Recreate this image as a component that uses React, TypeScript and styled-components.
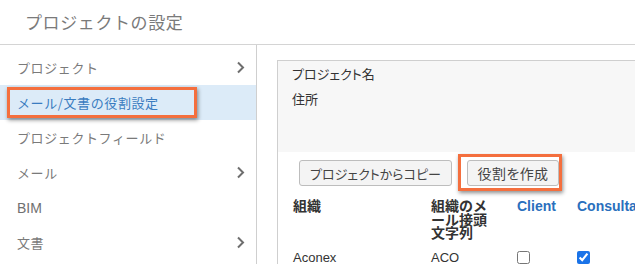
import React from "react";
import styled, { createGlobalStyle } from "styled-components";

const GlobalStyle = createGlobalStyle`
  html, body { margin: 0; padding: 0; background: #fff; }
  body {
    font-family: "Liberation Sans", "Noto Sans CJK JP", sans-serif;
    width: 635px; height: 264px; overflow: hidden;
  }
`;

const Page = styled.div`
  width: 635px;
  height: 264px;
  overflow: hidden;
  display: flex;
  flex-direction: column;
`;

const Header = styled.header`
  flex: none;
  height: 45px;
  border-bottom: 1px solid #d4d4d4;
  display: flex;
  align-items: center;
  padding-left: 25px;
  box-sizing: border-box;
`;

const Title = styled.h1`
  margin: -2px 0 0;
  font-family: "Noto Sans CJK JP", sans-serif;
  font-weight: 400;
  font-size: 17px;
  letter-spacing: 0.6px;
  color: #7a7a7a;
  line-height: 1;
`;

const Body = styled.div`
  flex: 1;
  display: flex;
  min-height: 0;
`;

const Sidebar = styled.nav`
  width: 257px;
  flex: none;
  border-right: 1px solid #cfcfcf;
  padding-top: 5px;
  box-sizing: border-box;
`;

const NavItem = styled.div<{ $active?: boolean }>`
  position: relative;
  height: 35px;
  display: flex;
  align-items: center;
  justify-content: space-between;
  padding: 0 11px 0 17px;
  background: ${(p) => (p.$active ? "#dcebf8" : "transparent")};
  color: ${(p) => (p.$active ? "#3a7cc0" : "#7a7a7a")};
  font-family: "Noto Sans CJK JP", sans-serif;
  font-size: 13px;
  letter-spacing: 0.6px;
`;

const NavLatin = styled.span`
  font-family: "Liberation Sans", sans-serif;
  font-size: 14px;
  letter-spacing: 0;
  color: #707070;
`;

const Highlight = styled.div`
  position: absolute;
  box-sizing: border-box;
  border: 3px solid #f46f3e;
  box-shadow: 1px 2px 4px rgba(0, 0, 0, 0.45);
  pointer-events: none;
`;

const NavHighlight = styled(Highlight)`
  left: 7px;
  top: 2px;
  width: 190px;
  height: 31px;
`;

const Chevron = () => (
  <svg width="9" height="13" viewBox="0 0 9 13" aria-hidden>
    <path d="M2 1.5 L7 6.5 L2 11.5" fill="none" stroke="#6e6e6e" strokeWidth="2" />
  </svg>
);

const Main = styled.main`
  flex: 1;
  min-width: 0;
  overflow: hidden;
  padding: 15px 0 0 20px;
`;

const Content = styled.section`
  width: 600px;
  height: 100%;
  border-top: 1px solid #cfcfcf;
  border-left: 1px solid #cfcfcf;
  box-sizing: border-box;
`;

const InfoBox = styled.div`
  height: 91px;
  background: #f7f7f7;
  padding: 0 0 0 14px;
  box-sizing: border-box;
  display: flex;
  flex-direction: column;
`;

const InfoLine = styled.div`
  height: 25px;
  display: flex;
  align-items: center;
  font-family: "Noto Sans CJK JP", sans-serif;
  font-feature-settings: "palt";
  font-size: 13px;
  color: #333;
`;

const Toolbar = styled.div`
  display: flex;
  gap: 15px;
  padding: 8px 0 0 21px;
  height: 47px;
  box-sizing: border-box;
`;

const Button = styled.button`
  height: 26px;
  box-sizing: border-box;
  border: 1px solid #bdbdbd;
  border-radius: 3px;
  background: #f4f4f4;
  color: #444;
  font-family: "Noto Sans CJK JP", sans-serif;
  font-feature-settings: "palt";
  font-size: 13px;
  padding: 0;
  white-space: nowrap;
  display: flex;
  align-items: center;
  justify-content: center;
`;

const CopyButton = styled(Button)`
  width: 153px;
`;

const CreateButton = styled(Button)`
  width: 92px;
  font-size: 14px;
  letter-spacing: 0.4px;
`;

const HighlightWrap = styled.div`
  position: relative;
`;

const ButtonHighlight = styled(Highlight)`
  left: -9px;
  top: -6px;
  width: 104px;
  height: 37px;
`;

const Table = styled.div`
  display: grid;
  grid-template-columns: 138px 86px 60px 120px;
  padding-left: 15px;
`;

const HeadCell = styled.div<{ $blue?: boolean }>`
  font-family: "Liberation Sans", "Noto Sans CJK JP", sans-serif;
  font-weight: 700;
  font-size: 14px;
  line-height: 13.5px;
  color: ${(p) => (p.$blue ? "#2a6fbd" : "#333")};
  height: 46px;
  padding-top: 1px;
  box-sizing: border-box;
`;

const WrapText = styled.div`
  width: 62px;
  word-break: break-all;
`;

const Cell = styled.div`
  font-family: "Liberation Sans", "Noto Sans CJK JP", sans-serif;
  font-size: 13px;
  color: #333;
  height: 24px;
  display: flex;
  align-items: center;
`;

const Check = styled.input`
  margin: 0;
  width: 13px;
  height: 13px;
  accent-color: #1a73e8;
`;

const navItems = [
  { label: "プロジェクト", chevron: true },
  { label: "メール/文書の役割設定", active: true },
  { label: "プロジェクトフィールド" },
  { label: "メール", chevron: true },
  { label: "BIM", latin: true },
  { label: "文書", chevron: true },
];

export default function App() {
  return (
    <Page>
      <GlobalStyle />
      <Header>
        <Title>プロジェクトの設定</Title>
      </Header>
      <Body>
        <Sidebar>
          {navItems.map((it) => (
            <NavItem key={it.label} $active={it.active}>
              {it.latin ? <NavLatin>{it.label}</NavLatin> : <span>{it.label}</span>}
              {it.chevron && <Chevron />}
              {it.active && <NavHighlight />}
            </NavItem>
          ))}
        </Sidebar>
        <Main>
          <Content>
            <InfoBox>
              <InfoLine>プロジェクト名</InfoLine>
              <InfoLine>住所</InfoLine>
            </InfoBox>
            <Toolbar>
              <CopyButton>プロジェクトからコピー</CopyButton>
              <HighlightWrap>
                <CreateButton>役割を作成</CreateButton>
                <ButtonHighlight />
              </HighlightWrap>
            </Toolbar>
            <Table>
              <HeadCell>組織</HeadCell>
              <HeadCell>
                <WrapText>組織のメール接頭文字列</WrapText>
              </HeadCell>
              <HeadCell $blue>Client</HeadCell>
              <HeadCell $blue>Consultant</HeadCell>
              <Cell>Aconex</Cell>
              <Cell>ACO</Cell>
              <Cell>
                <Check type="checkbox" readOnly />
              </Cell>
              <Cell>
                <Check type="checkbox" defaultChecked />
              </Cell>
            </Table>
          </Content>
        </Main>
      </Body>
    </Page>
  );
}
